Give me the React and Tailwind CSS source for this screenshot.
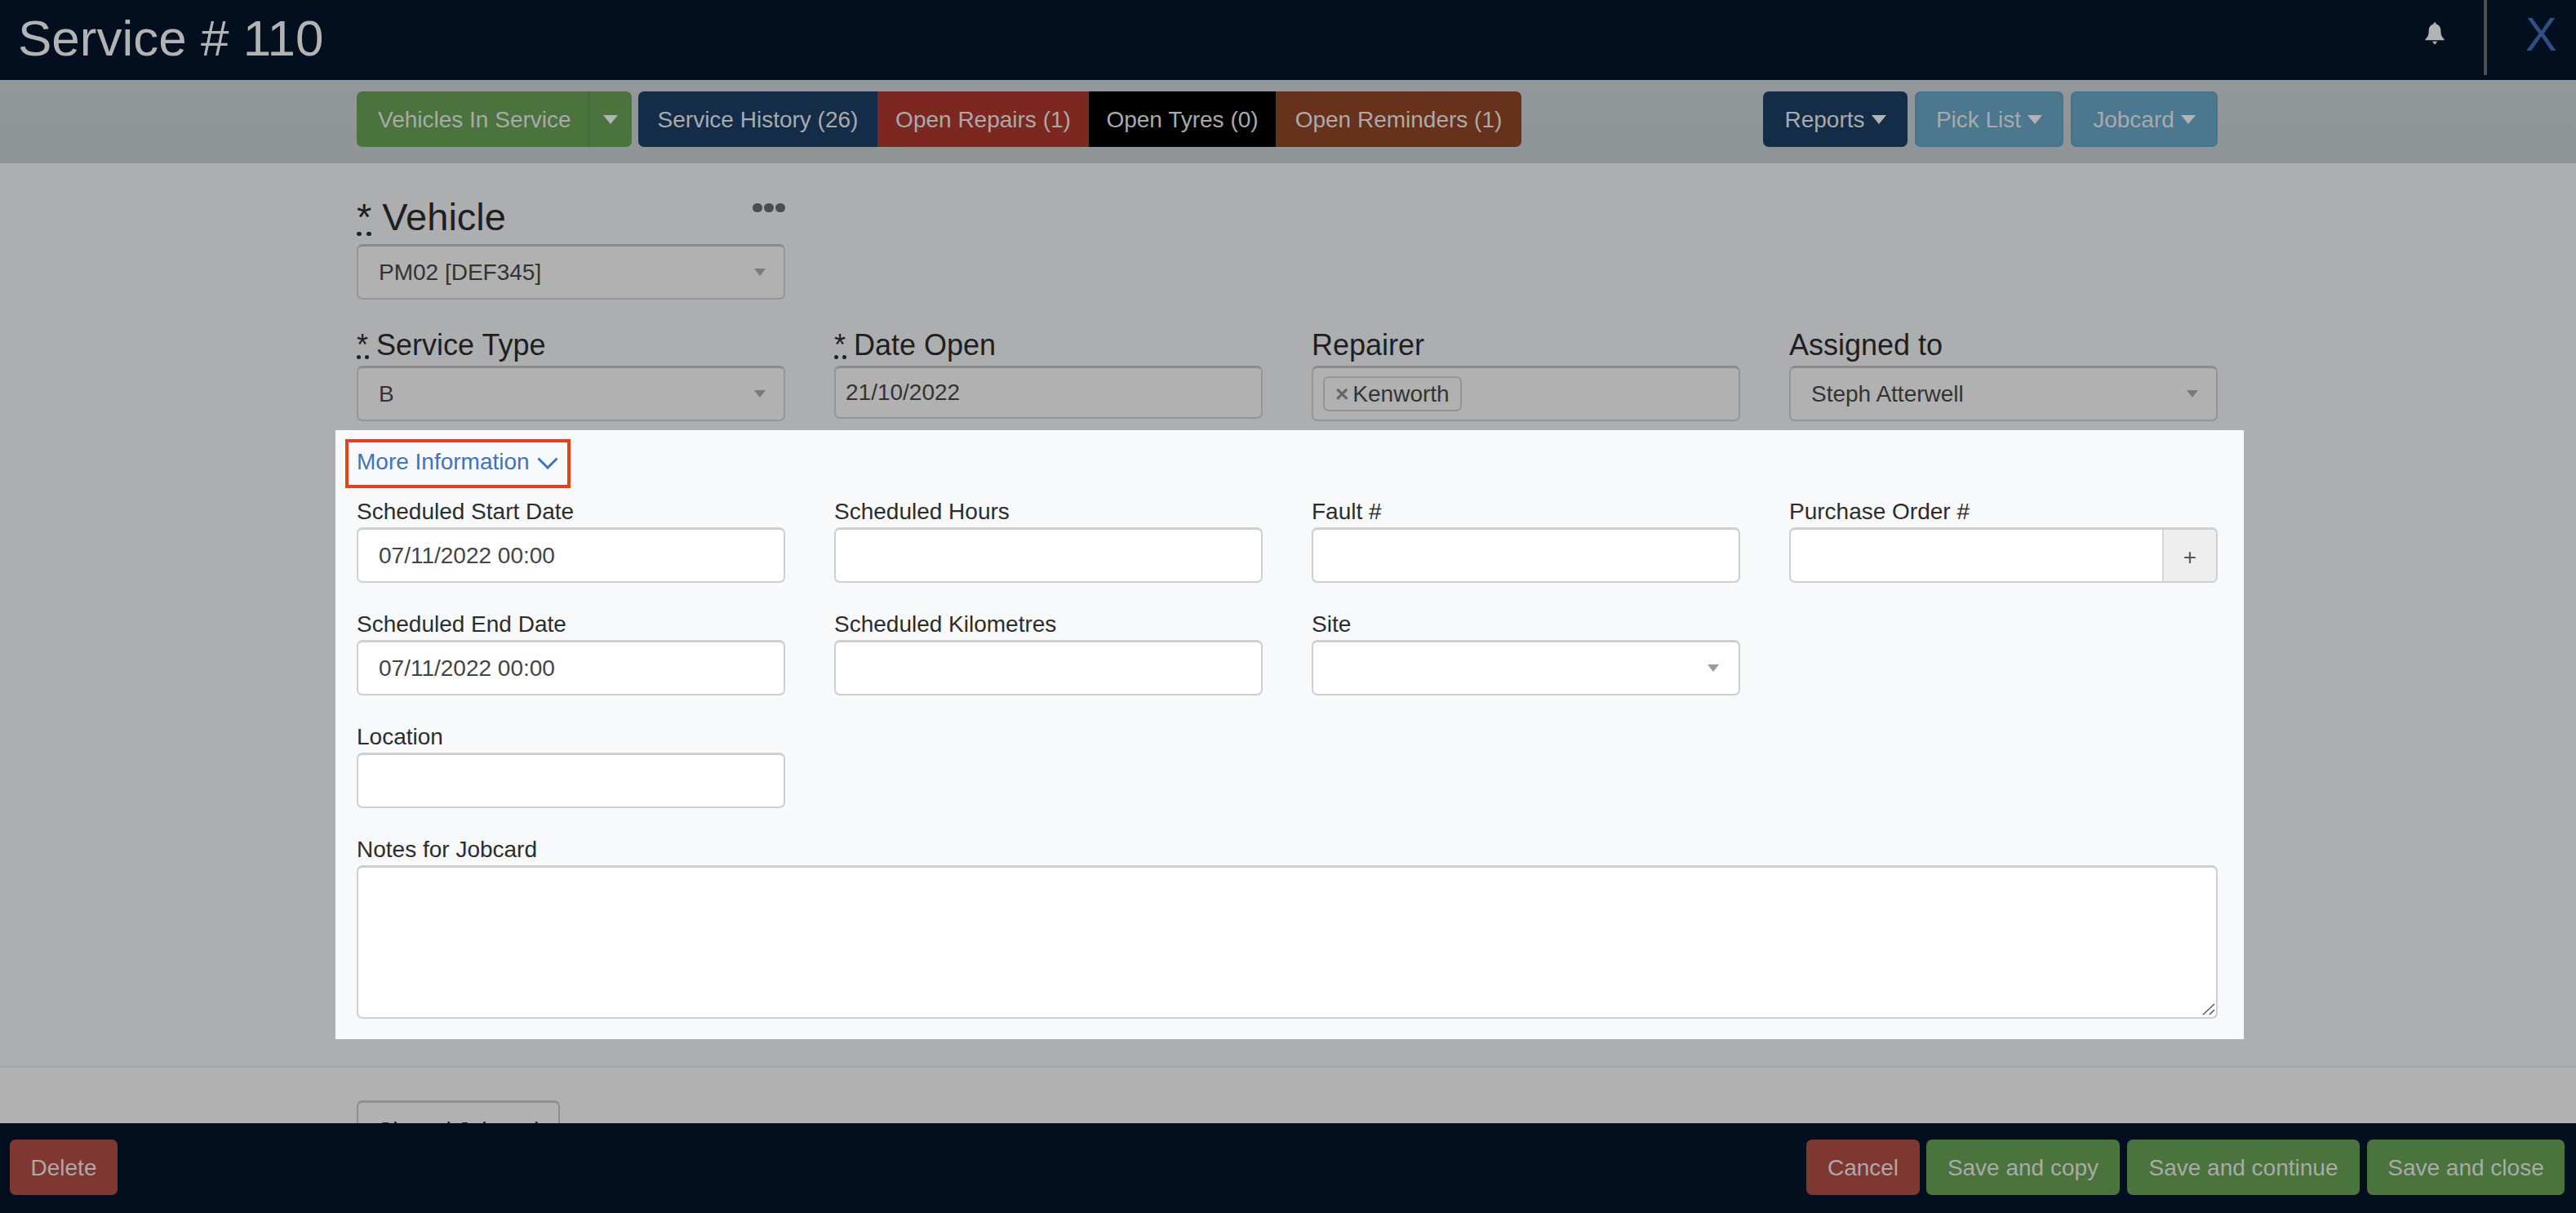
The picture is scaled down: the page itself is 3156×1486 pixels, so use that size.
const font = { fontFamily: '"Liberation Sans", Arial, sans-serif' }

const SelectCaret = ({ className = 'border-t-[#7a7a7a]' }) => (
  <span className={`inline-block w-0 h-0 border-x-[7px] border-x-transparent border-t-[9px] ${className}`} />
)

const MenuCaret = () => (
  <span className="inline-block w-0 h-0 border-x-[9px] border-x-transparent border-t-[11px] border-t-[#b3b3b3]" />
)

const Btn = ({ className = '', children }) => (
  <div className={`h-[68px] pt-[1px] flex items-center justify-center rounded-[7px] text-[28px] text-[#a9aaa9] ${className}`}>
    {children}
  </div>
)

const Dot = ({ size }) => <span className={`block rounded-full bg-[#222] ${size}`} />

const Required = ({ dots, gap, size }) => (
  <span>
    <span className="relative inline-block">
      *
      <span className={`absolute left-0 flex ${dots} ${gap}`}>
        <Dot size={size} />
        <Dot size={size} />
      </span>
    </span>{' '}
  </span>
)

const BigLabel = ({ required, children }) => (
  <div className="h-[48px] pt-[3px] text-[36px] leading-[40px] text-[#1f1f1f] whitespace-nowrap">
    {required && <Required dots="top-[32px]" gap="gap-[5px]" size="w-[5px] h-[5px]" />}
    {children}
  </div>
)

const DimSelect = ({ value }) => (
  <div className="h-[68px] flex items-center justify-between pl-[25px] pr-[22px] rounded-[7px] bg-[#b1b1b1] border-2 border-[#959595] border-t-[3px] border-t-[#8b8b8b] text-[28px] text-[#333]">
    <span>{value}</span>
    <SelectCaret />
  </div>
)

const Label = ({ children }) => (
  <div className="h-[38px] pt-[2px] text-[28px] leading-[34px] text-[#2d2d2d] whitespace-nowrap">{children}</div>
)

const Field = ({ label, value, children }) => (
  <div>
    <Label>{label}</Label>
    {children || (
      <div className="h-[68px] flex items-center pl-[25px] rounded-[7px] bg-white border-2 border-[#cfcfcf] border-t-[3px] text-[28px] text-[#444]">
        {value}
      </div>
    )}
  </div>
)

export default function App() {
  return (
    <div className="h-screen flex flex-col overflow-hidden bg-[#adaeb0]" style={font}>
      {/* top bar */}
      <div className="h-[98px] shrink-0 flex items-start justify-between bg-[#010f1e]">
        <div className="pl-[22px] pt-[14px] text-[62px] leading-[66px] text-[#b3b3b3]">Service # 110</div>
        <div className="flex items-start">
          <svg className="mt-[27px] mr-[48px] w-[24px] h-[28px]" viewBox="0 0 26 30" fill="#b3b3b3">
            <path d="M13 0c1 0 1.600.9 1.700 2.500C19.500 3.600 21 7.500 21 12c0 5 1.500 8 4.500 10.500V24H.5v-1.500C3.500 20 5 17 5 12c0-4.500 1.500-8.400 6.300-9.500C11.400.9 12 0 13 0z" />
            <path d="M9.500 25.500h7L13 30z" />
          </svg>
          <div className="h-[92px] w-[4px] bg-[#4f4f4f]" />
          <div className="w-[109px] pl-[47px] pt-[9px] text-[58px] leading-[66px] text-[#2f5084]">X</div>
        </div>
      </div>

      {/* toolbar */}
      <div className="h-[102px] shrink-0 bg-gradient-to-b from-[#92979a] to-[#8f9497]">
        <div className="w-[2280px] ml-[437px] pt-[14px] flex justify-between">
          <div className="flex">
            <Btn className="w-[337px] mr-[8px] bg-[#4a733e] !justify-start">
              <div className="w-[285px] pl-[26px] h-full flex items-center border-r-2 border-[#446b3a]">Vehicles In Service</div>
              <div className="flex-1 flex justify-center"><MenuCaret /></div>
            </Btn>
            <Btn className="w-[293px] bg-[#132d49] rounded-r-none">Service History (26)</Btn>
            <Btn className="w-[259px] bg-[#7c2820] rounded-none">Open Repairs (1)</Btn>
            <Btn className="w-[229px] bg-black rounded-none">Open Tyres (0)</Btn>
            <Btn className="w-[301px] bg-[#67311b] rounded-l-none">Open Reminders (1)</Btn>
          </div>
          <div className="flex gap-[9px]">
            <Btn className="w-[177px] gap-[8px] bg-[#132d49]">Reports <MenuCaret /></Btn>
            <Btn className="w-[182px] gap-[8px] bg-[#4b778f] border-2 border-[#47728a]">Pick List <MenuCaret /></Btn>
            <Btn className="w-[180px] gap-[8px] bg-[#4b778f] border-2 border-[#47728a]">Jobcard <MenuCaret /></Btn>
          </div>
        </div>
      </div>

      {/* form */}
      <div className="flex-1 min-h-0 overflow-hidden">
        <div className="h-[1108px] border-b-2 border-[#a4a5a7]">
          <div className="w-[2280px] ml-[437px]">
            <div className="grid grid-cols-4 gap-x-[60px] pt-[42px]">
              <div>
                <div className="h-[57px] flex justify-between">
                  <div className="text-[47px] leading-[48px] text-[#1f1f1f]">
                    <Required dots="top-[42px]" gap="gap-[6px]" size="w-[6px] h-[5px]" />Vehicle
                  </div>
                  <div className="flex gap-[2px] mt-[7px]">
                    <span className="w-[12px] h-[11px] rounded-full bg-[#4d4d4d]" />
                    <span className="w-[12px] h-[11px] rounded-full bg-[#4d4d4d]" />
                    <span className="w-[12px] h-[11px] rounded-full bg-[#4d4d4d]" />
                  </div>
                </div>
                <DimSelect value="PM02 [DEF345]" />
              </div>
            </div>

            <div className="grid grid-cols-4 gap-x-[60px] pt-[33px] h-[160px]">
              <div>
                <BigLabel required>Service Type</BigLabel>
                <DimSelect value="B" />
              </div>
              <div>
                <BigLabel required>Date Open</BigLabel>
                <div className="h-[65px] flex items-center pl-[12px] rounded-[7px] bg-[#b1b1b1] border-2 border-[#959595] border-t-[3px] border-t-[#8b8b8b] text-[28px] text-[#333]">
                  21/10/2022
                </div>
              </div>
              <div>
                <BigLabel>Repairer</BigLabel>
                <div className="h-[68px] flex items-center pl-[12px] rounded-[7px] bg-[#b1b1b1] border-2 border-[#959595] border-t-[3px] border-t-[#8b8b8b]">
                  <span className="h-[43px] flex items-center gap-[5px] pl-[13px] pr-[13px] rounded-[7px] border-2 border-[#959595] text-[28px] text-[#333]">
                    <span className="font-bold text-[#666]">×</span>Kenworth
                  </span>
                </div>
              </div>
              <div>
                <BigLabel>Assigned to</BigLabel>
                <DimSelect value="Steph Atterwell" />
              </div>
            </div>

            {/* highlighted section */}
            <div className="-ml-[26px] -mr-[32px] h-[746px] bg-[#f8f9fb] pl-[26px] pr-[32px] pt-[11px]">
              <div className="h-[60px] w-[276px] -ml-[14px] pl-[10px] pb-[4px] flex items-center gap-[9px] border-4 border-[#e8401f] text-[28px] text-[#3f74bd]">
                More Information
                <svg width="26" height="15" viewBox="0 0 26 15" fill="none" stroke="#3f74bd" strokeWidth="3" className="mt-[2px]">
                  <path d="M1.500 1.500 13 13 24.500 1.500" />
                </svg>
              </div>
              <div className="grid grid-cols-4 gap-x-[60px] gap-y-[32px] pt-[10px]">
                <Field label="Scheduled Start Date" value="07/11/2022 00:00" />
                <Field label="Scheduled Hours" value="" />
                <Field label="Fault #" value="" />
                <Field label="Purchase Order #">
                  <div className="h-[68px] flex rounded-[7px] bg-white border-2 border-[#cfcfcf] border-t-[3px] overflow-hidden">
                    <div className="flex-1" />
                    <div className="w-[66px] pt-[4px] flex items-center justify-center bg-[#eeeeee] border-l-2 border-[#d6d6d6] text-[28px] text-[#555]">+</div>
                  </div>
                </Field>
                <Field label="Scheduled End Date" value="07/11/2022 00:00" />
                <Field label="Scheduled Kilometres" value="" />
                <Field label="Site">
                  <div className="h-[68px] flex items-center justify-end pr-[24px] rounded-[7px] bg-white border-2 border-[#cfcfcf] border-t-[3px]">
                    <SelectCaret className="border-t-[#999]" />
                  </div>
                </Field>
                <div />
                <Field label="Location" value="" />
              </div>
              <div className="pt-[32px]">
                <Label>Notes for Jobcard</Label>
                <div className="relative">
                  <textarea className="block w-full h-[188px] resize-none rounded-[7px] bg-white border-2 border-[#cfcfcf] border-t-[3px] outline-none" />
                  <svg className="absolute right-[3px] bottom-[4px]" width="16" height="15" viewBox="0 0 16 15" fill="none" stroke="#555" strokeWidth="1.500">
                    <path d="M1 14 15 1M9 14l6-6" />
                  </svg>
                </div>
              </div>
            </div>
          </div>
        </div>
        <div className="h-[200px] bg-[#b1b1b1]">
          <div className="w-[2280px] ml-[437px] pt-[40px]">
            <div className="w-[249px] h-[68px] pt-[5px] flex items-center justify-center rounded-[7px] border-2 border-[#8f8f8f] border-t-[3px] text-[28px] text-[#222]">
              Shared Jobcard
            </div>
          </div>
        </div>
      </div>

      {/* footer */}
      <div className="h-[110px] shrink-0 bg-[#010f1e] flex items-start justify-between pl-[12px] pr-[14px] pt-[20px]">
        <Btn className="w-[132px] bg-[#7f3732]">Delete</Btn>
        <div className="flex">
          <Btn className="w-[139px] mr-[8px] bg-[#7f3732]">Cancel</Btn>
          <Btn className="w-[237px] mr-[9px] bg-[#4a733e]">Save and copy</Btn>
          <Btn className="w-[285px] mr-[9px] bg-[#4a733e]">Save and continue</Btn>
          <Btn className="w-[242px] bg-[#4a733e]">Save and close</Btn>
        </div>
      </div>
    </div>
  )
}
